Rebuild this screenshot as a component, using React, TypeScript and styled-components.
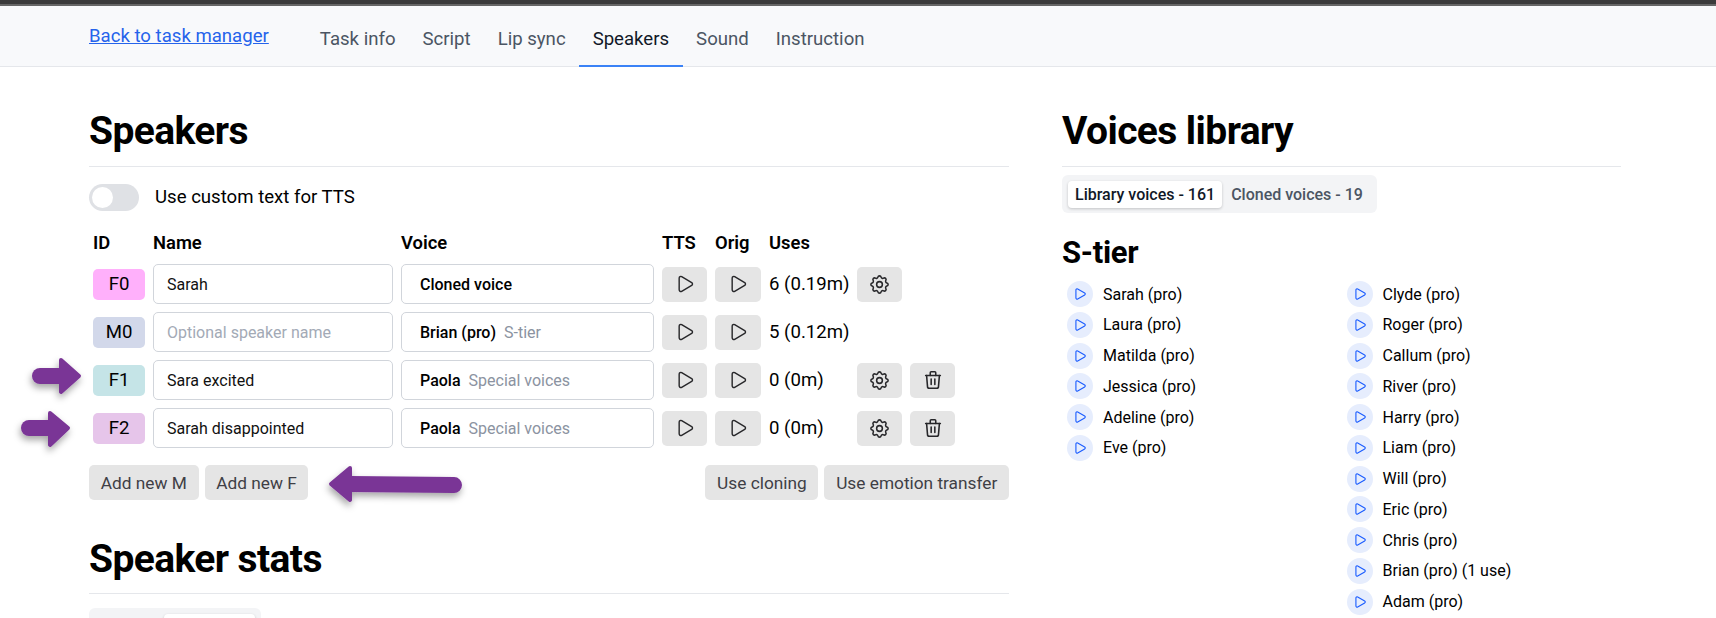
import React from "react";
import styled, { createGlobalStyle } from "styled-components";
import { Play } from "lucide-react";
import { TbSettings, TbTrash } from "react-icons/tb";

const Global = createGlobalStyle`
  html, body { margin: 0; padding: 0; background: #fff; }
  body { font-family: Roboto, "Liberation Sans", sans-serif; color: #000; overflow: hidden; height: 618px; }
  * { box-sizing: border-box; }
`;
const Page = styled.div`position: relative; width: 1716px; height: 618px; overflow: hidden;`;
const TopStrip = styled.div`height: 6px; background: #3b3b3b; border-bottom: 2px solid #666;`;
const Nav = styled.nav`
  height: 61px; background: #f8f9fb; border-bottom: 1px solid #e5e7eb;
  padding-left: 89px; display: flex; align-items: stretch;
`;
const BackLink = styled.a`
  color: #2563eb; text-decoration: underline; font-size: 18.6px; line-height: 20px;
  margin-top: 20px; margin-right: 37.5px; height: 22px;
`;
const NavItem = styled.div<{ $active?: boolean }>`
  padding: 6px 13.5px 0; display: flex; align-items: center; font-size: 18.6px;
  color: ${p => (p.$active ? "#111827" : "#4b5563")};
  border-bottom: 2px solid ${p => (p.$active ? "#3b82f6" : "transparent")};
  margin-bottom: -1px;
`;
const Columns = styled.div`display: flex; padding-left: 89px; gap: 53px;`;
const LeftCol = styled.section`width: 920px; flex: none;`;
const RightCol = styled.section`width: 559px; flex: none;`;
const H1 = styled.h1`
  margin: 0; font-size: 39px; line-height: 46px; font-weight: 700; letter-spacing: -0.6px;
  padding-top: 41px; border-bottom: 1px solid #e5e7eb; height: 100px;
`;
const ToggleRow = styled.div`display: flex; align-items: center; gap: 16px; height: 28px; margin-top: 16px;`;
const Toggle = styled.div`
  width: 50px; height: 27px; border-radius: 14px; background: #dfe1e5; padding: 3px;
`;
const Knob = styled.div`width: 21px; height: 21px; border-radius: 50%; background: #fff;`;
const ToggleLabel = styled.span`font-size: 18.6px;`;
const Table = styled.div`
  display: grid; margin-top: 20px; margin-left: 4px;
  grid-template-columns: 52px 240px 253px 45px 46px 80px 45px 45px;
  column-gap: 8px; row-gap: 8px; align-items: center;
`;
const Th = styled.div`font-size: 18.4px; font-weight: 600; height: 24px; line-height: 24px; margin-bottom: 1px;`;
const Badge = styled.div<{ $bg: string }>`
  height: 31px; border-radius: 5px; background: ${p => p.$bg}; font-size: 18.6px;
  display: flex; align-items: center; justify-content: center;
`;
const Field = styled.div<{ $empty?: boolean }>`
  height: 40px; border: 1px solid #d1d5db; border-radius: 5px; padding-left: 13px; background: #fff;
  display: flex; align-items: center; font-size: 16px; color: ${p => (p.$empty ? "#a3aab6" : "#111")};
`;
const VoiceField = styled(Field)`padding-left: 18px; gap: 8px;`;
const VoiceName = styled.span`font-weight: 500; color: #000;`;
const VoiceTier = styled.span`color: #8b93a1;`;
const IconBtn = styled.button`
  height: 35px; border: 0; border-radius: 5px; background: #e5e5e5; color: #27272a; padding: 0;
  display: flex; align-items: center; justify-content: center;
`;
const Uses = styled.div`font-size: 18.6px; white-space: nowrap;`;
const Empty = styled.div``;
const Actions = styled.div`display: flex; justify-content: space-between; margin-top: 17px; height: 35px;`;
const BtnGroup = styled.div`display: flex; gap: 6px;`;
const TextBtn = styled.button`
  height: 35px; border: 0; border-radius: 5px; background: #e5e5e5; color: #3f3f46; padding: 0 11.7px;
  font: 400 17.3px Roboto, sans-serif;
`;
const H1Second = styled.h1`
  margin: 17px 0 0; height: 77px; font-size: 39px; line-height: 46px; font-weight: 700; letter-spacing: -0.6px;
  padding-top: 19px; border-bottom: 1px solid #e5e7eb;
`;
const TabBar = styled.div<{ $w: number; $top: number }>`
  display: flex; align-items: center; gap: 2px; width: ${p => p.$w}px; height: 38px; background: #f3f4f6;
  border-radius: 6px; padding: 0 6px; margin-top: ${p => p.$top}px;
`;
const Tab = styled.div<{ $active?: boolean; $w?: number }>`
  height: 27px; display: flex; align-items: center; justify-content: center; border-radius: 4px;
  font-size: 16px; font-weight: 500; white-space: nowrap; padding: 0 7px;
  color: ${p => (p.$active ? "#111827" : "#4b5563")};
  background: ${p => (p.$active ? "#fff" : "transparent")};
  box-shadow: ${p => (p.$active ? "0 1px 3px rgba(0,0,0,.2)" : "none")};
  ${p => (p.$w ? `width: ${p.$w}px;` : "")}
`;
const H2 = styled.h2`margin: 22px 0 0; font-size: 31px; line-height: 36px; font-weight: 700; letter-spacing: -0.3px;`;
const VoiceCols = styled.div`display: grid; grid-template-columns: 279.5px 1fr; padding-left: 5px; margin-top: 10px;`;
const VoiceList = styled.div`display: flex; flex-direction: column; gap: 4.75px;`;
const VoiceRow = styled.div`display: flex; align-items: center; height: 26px; gap: 10px; font-size: 16px;`;
const Circle = styled.div`
  width: 26px; height: 26px; border-radius: 50%; background: #e6edfd; color: #1a5cff;
  display: flex; align-items: center; justify-content: center;
`;
const ArrowLayer = styled.svg`position: absolute; left: 0; top: 0; pointer-events: none;`;

const left = ["Sarah (pro)", "Laura (pro)", "Matilda (pro)", "Jessica (pro)", "Adeline (pro)", "Eve (pro)"];
const right = ["Clyde (pro)", "Roger (pro)", "Callum (pro)", "River (pro)", "Harry (pro)", "Liam (pro)", "Will (pro)", "Eric (pro)", "Chris (pro)", "Brian (pro) (1 use)", "Adam (pro)"];
const rows = [
  { id: "F0", bg: "#ffb0fb", name: "Sarah", voice: "Cloned voice", tier: "", uses: "6 (0.19m)", gear: true, trash: false },
  { id: "M0", bg: "#d2d8ea", name: "", voice: "Brian (pro)", tier: "S-tier", uses: "5 (0.12m)", gear: false, trash: false },
  { id: "F1", bg: "#c5e4e7", name: "Sara excited", voice: "Paola", tier: "Special voices", uses: "0 (0m)", gear: true, trash: true },
  { id: "F2", bg: "#e6c5ea", name: "Sarah disappointed", voice: "Paola", tier: "Special voices", uses: "0 (0m)", gear: true, trash: true },
];
const P = () => <Play size={20} strokeWidth={1.7} />;
const V = ({ n }: { n: string }) => (
  <VoiceRow>
    <Circle><Play size={14} strokeWidth={1.9} /></Circle>
    {n}
  </VoiceRow>
);
const Arrow = ({ shaft, head }: { shaft: string; head: string }) => (
  <g>
    <path d={shaft} fill="none" stroke="#7a3596" strokeWidth={16} strokeLinecap="round" />
    <polygon points={head} fill="#7a3596" stroke="#7a3596" strokeWidth={4} strokeLinejoin="round" />
  </g>
);
export default function App() {
  return (
    <Page>
      <Global />
      <TopStrip />
      <Nav>
        <BackLink href="#">Back to task manager</BackLink>
        <NavItem>Task info</NavItem>
        <NavItem>Script</NavItem>
        <NavItem>Lip sync</NavItem>
        <NavItem $active>Speakers</NavItem>
        <NavItem>Sound</NavItem>
        <NavItem>Instruction</NavItem>
      </Nav>
      <Columns>
        <LeftCol>
          <H1>Speakers</H1>
          <ToggleRow><Toggle><Knob /></Toggle><ToggleLabel>Use custom text for TTS</ToggleLabel></ToggleRow>
          <Table>
            <Th>ID</Th><Th>Name</Th><Th>Voice</Th><Th>TTS</Th><Th>Orig</Th><Th>Uses</Th><Th /><Th />
            {rows.map(r => (
              <React.Fragment key={r.id}>
                <Badge $bg={r.bg}>{r.id}</Badge>
                <Field $empty={!r.name}>{r.name || "Optional speaker name"}</Field>
                <VoiceField><VoiceName>{r.voice}</VoiceName>{r.tier && <VoiceTier>{r.tier}</VoiceTier>}</VoiceField>
                <IconBtn><P /></IconBtn>
                <IconBtn><P /></IconBtn>
                <Uses>{r.uses}</Uses>
                {r.gear ? <IconBtn><TbSettings size={23} strokeWidth={1.6} /></IconBtn> : <Empty />}
                {r.trash ? <IconBtn><TbTrash size={22} strokeWidth={1.7} /></IconBtn> : <Empty />}
              </React.Fragment>
            ))}
          </Table>
          <Actions>
            <BtnGroup><TextBtn>Add new M</TextBtn><TextBtn>Add new F</TextBtn></BtnGroup>
            <BtnGroup><TextBtn>Use cloning</TextBtn><TextBtn>Use emotion transfer</TextBtn></BtnGroup>
          </Actions>
          <H1Second>Speaker stats</H1Second>
          <TabBar $w={172} $top={14}><Tab $w={67} /><Tab $active $w={91} /></TabBar>
        </LeftCol>
        <RightCol>
          <H1>Voices library</H1>
          <TabBar $w={315} $top={8}><Tab $active>Library voices - 161</Tab><Tab>Cloned voices - 19</Tab></TabBar>
          <H2>S-tier</H2>
          <VoiceCols>
            <VoiceList>{left.map(n => <V key={n} n={n} />)}</VoiceList>
            <VoiceList>{right.map(n => <V key={n} n={n} />)}</VoiceList>
          </VoiceCols>
        </RightCol>
      </Columns>
      <ArrowLayer width="1716" height="618" viewBox="0 0 1716 618">
        <defs>
          <filter id="arrowShadow" x="-30%" y="-30%" width="160%" height="170%">
            <feDropShadow dx="-1" dy="4" stdDeviation="3.5" floodColor="#000" floodOpacity="0.35" />
          </filter>
        </defs>
        <g filter="url(#arrowShadow)">
          <Arrow shaft="M40 376H62" head="61,360 79,376 61,392" />
          <Arrow shaft="M29 428H50" head="50,413 68,428 50,445" />
          <Arrow shaft="M454 485L350 484" head="350,468 331,484 350,500" />
        </g>
      </ArrowLayer>
    </Page>
  );
}
